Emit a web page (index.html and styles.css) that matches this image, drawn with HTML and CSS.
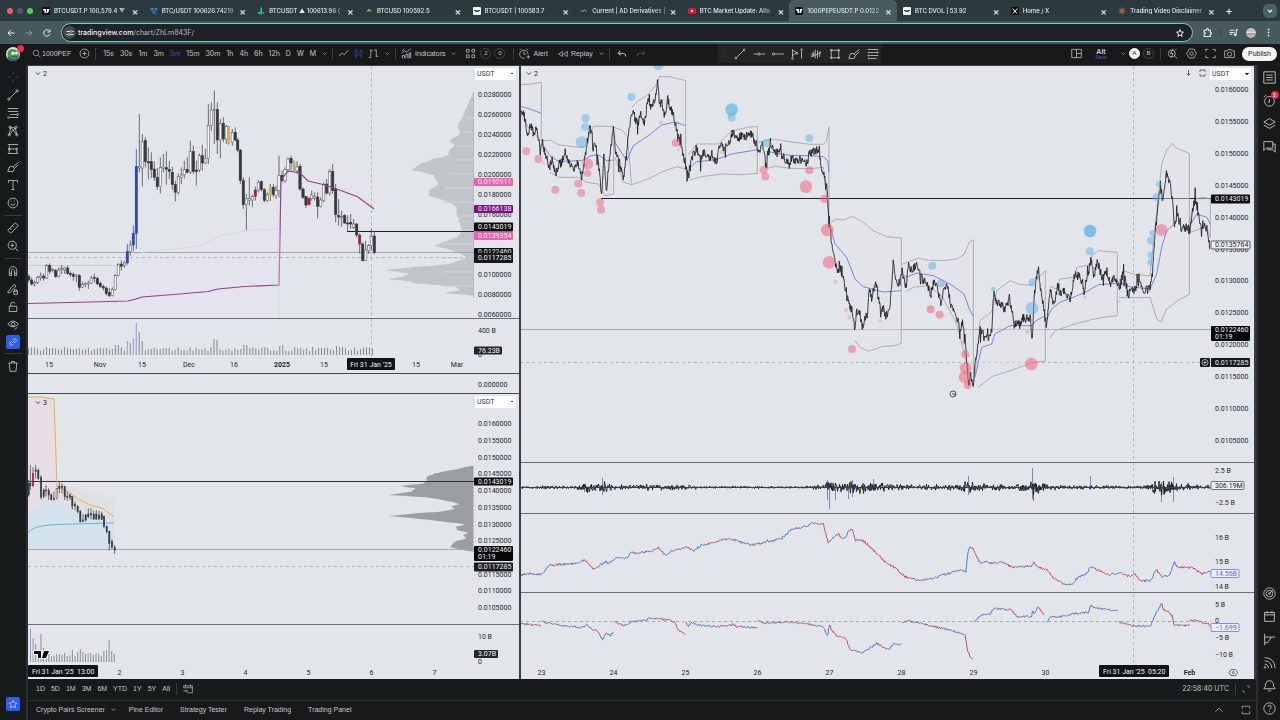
FILE: index.html
```html
<!DOCTYPE html>
<html lang="en">
<head>
<meta charset="utf-8">
<title>1000PEPEUSDT.P 0.0122460</title>
<link rel="stylesheet" href="styles.css">
</head>
<body>
<header class="tabs">
  <div class="lights"><i class="red"></i><i class="grey"></i><i class="green"></i></div>
  <nav class="tablist">
    <div class="tab"><svg class="fav" viewBox="0 0 16 16"><rect width="16" height="16" rx="3" fill="#111"/><path d="M2 4h6v8H5V7H2zM10 4h5l-3 8H9z" fill="#fff"/></svg><span>BTCUSDT.P 100,579.4 ▼</span><button aria-label="Close">×</button></div>
    <div class="tab"><svg class="fav" viewBox="0 0 16 16"><path d="M1 2h6v5H1zM9 2h6v5H9zM5 8h6v5H5z" fill="#3f7fb8"/><path d="M8 9h5v6H8z" fill="#2a5c93"/></svg><span>BTC/USDT 100626.74219</span><button aria-label="Close">×</button></div>
    <div class="tab"><svg class="fav" viewBox="0 0 16 16"><path d="M7 1h3v14H7zM1 10h5v4H3zM11 8l4 5h-4z" fill="#2fc9a0"/></svg><span>BTCUSDT ▲ 100613.96 (</span><button aria-label="Close">×</button></div>
    <div class="tab"><svg class="fav" viewBox="0 0 16 16"><path d="M2 9l6-6 6 6z" fill="#8fae3c"/></svg><span>BTCUSD 100592.5</span><button aria-label="Close">×</button></div>
    <div class="tab"><svg class="fav" viewBox="0 0 16 16"><rect width="16" height="16" rx="2" fill="#f2f4f4"/><path d="M2 7h3l1 3 1-3h2l1 3 1-3h3" fill="none" stroke="#333" stroke-width="2"/></svg><span>BTCUSDT | 100583.7</span><button aria-label="Close">×</button></div>
    <div class="tab"><svg class="fav" viewBox="0 0 16 16"><path d="M2 10l3-4 2 3 2-4 5 5" fill="none" stroke="#8b9599" stroke-width="2"/></svg><span>Current | AD Derivatives |</span><button aria-label="Close">×</button></div>
    <div class="tab"><svg class="fav" viewBox="0 0 16 16"><rect y="2" width="16" height="12" rx="3" fill="#e0103a"/><path d="M6 5l5 3-5 3z" fill="#fff"/></svg><span>BTC Market Update: Alts</span><button aria-label="Close">×</button></div>
    <div class="tab on"><svg class="fav" viewBox="0 0 16 16"><rect width="16" height="16" rx="3" fill="#111"/><path d="M2 4h6v8H5V7H2zM10 4h5l-3 8H9z" fill="#fff"/></svg><span>1000PEPEUSDT.P 0.0122</span><button aria-label="Close">×</button></div>
    <div class="tab"><svg class="fav" viewBox="0 0 16 16"><rect width="16" height="16" rx="2" fill="#f2f4f4"/><path d="M2 7h3l1 3 1-3h2l1 3 1-3h3" fill="none" stroke="#333" stroke-width="2"/></svg><span>BTC DVOL | 53.92</span><button aria-label="Close">×</button></div>
    <div class="tab"><svg class="fav" viewBox="0 0 16 16"><rect width="16" height="16" rx="2" fill="#0c0e0f"/><path d="M3 3l9 10M13 3L4 13" stroke="#fff" stroke-width="2"/></svg><span>Home / X</span><button aria-label="Close">×</button></div>
    <div class="tab"><svg class="fav" viewBox="0 0 16 16"><path d="M8 1v14M1 8h14M3 3l10 10M13 3L3 13" stroke="#c4655a" stroke-width="2"/></svg><span>Trading Video Disclaimer</span><button aria-label="Close">×</button></div>
  </nav>
  <button class="newtab" aria-label="New tab">+</button>
  <button class="tabmenu" aria-label="Search tabs"><svg class="ic s8" viewBox="0 0 16 16"><path d="M4 6l4 4 4-4" stroke-width="2.500"/></svg></button>
</header>
<div class="address">
  <button aria-label="Back"><svg class="ic s8" viewBox="0 0 16 16"><path d="M15 8H2M8 2L2 8l6 6" stroke-width="2"/></svg></button>
  <button class="dim" aria-label="Forward"><svg class="ic s8" viewBox="0 0 16 16"><path d="M1 8h13M8 2l6 6-6 6" stroke-width="2"/></svg></button>
  <button aria-label="Reload"><svg class="ic s8" viewBox="0 0 16 16"><path d="M13 4a6.500 6.500 0 1 0 1 6M14 1v5H9" stroke-width="2"/></svg></button>
  <div class="urlbox">
    <span class="site"><svg class="ic s8" viewBox="0 0 16 16"><path d="M1 5h7M12 5h3M1 11h3M8 11h7" stroke-width="2"/><circle cx="10" cy="5" r="2"/><circle cx="6" cy="11" r="2"/></svg></span>
    <span class="url"><b>tradingview.com</b>/chart/ZhLm843F/</span>
    <svg class="ic s8 star" viewBox="0 0 16 16"><path d="M8 1l2 5 5 .4-4 3.300 1.300 5L8 12l-4.300 2.700 1.300-5-4-3.300L6 6z" stroke-width="2"/></svg>
  </div>
  <svg class="ic s9" viewBox="0 0 16 16"><path d="M2 4h4c0-4 4-4 4 0h3v4c3 0 3 3 0 3v4H2v-4c3 0 3-3 0-3z" stroke-width="2"/></svg>
  <i class="bar"></i>
  <svg class="ic s9" viewBox="0 0 16 16"><path d="M1 4h9M1 8h9M1 11h5M13 12V3h3" stroke-width="2"/><circle cx="11" cy="12" r="2" fill="currentColor"/></svg>
  <i class="face"></i>
  <svg class="s9" viewBox="0 0 16 16" fill="#e5ecec"><circle cx="8" cy="2.500" r="1.600"/><circle cx="8" cy="8" r="1.600"/><circle cx="8" cy="13.500" r="1.600"/></svg>
</div>
<div class="toolbar">
  <div class="avatar"><svg viewBox="0 0 16 16"><circle cx="8" cy="8" r="8" fill="#dfe5e2"/><path d="M2 6c2-5 9-5 13 1v4c-2 4-9 5-13 2z" fill="#4b9a48"/><circle cx="8" cy="7" r="1.800" fill="#fff"/><circle cx="12" cy="7" r="1.500" fill="#fff"/><path d="M6 11h8" stroke="#7c4a2c" stroke-width="1.500"/><path d="M3 12c3 4 8 4 10 1" stroke="#324a9c" stroke-width="2" fill="none"/></svg><b></b></div>
  <button class="symbol"><svg class="ic s9" viewBox="0 0 16 16"><circle cx="7" cy="7" r="5"/><path d="M11 11l4 4"/></svg>1000PEF</button>
  <button aria-label="Compare"><svg class="ic s12" viewBox="0 0 16 16"><circle cx="8" cy="8" r="6.500"/><path d="M8 5v6M5 8h6"/></svg></button>
  <i class="div"></i>
  <div class="times"><button>15s</button><button>30s</button><button>1m</button><button>3m</button><button class="sel">5m</button><button>15m</button><button>30m</button><button>1h</button><button>4h</button><button>6h</button><button>12h</button><button>D</button><button>W</button><button>M</button></div>
  <svg class="ic chev" viewBox="0 0 16 16"><path d="M2 5l6 6 6-6" stroke-width="2"/></svg>
  <i class="div"></i>
  <div class="icons">
    <svg class="ic s12" viewBox="0 0 16 16"><path d="M1 12l5-5 3 3 6-7"/></svg>
    <svg class="ic s12 blue" viewBox="0 0 16 16"><path d="M3 4h3v8H3zM10 5h3v6h-3zM4.500 1v3M4.500 12v3M11.500 2v3M11.500 11v3"/></svg>
    <svg class="ic s12" viewBox="0 0 16 16"><path d="M4 2v12M4 4h3M1 14h3M12 2v11M9 3h3M12 12h3"/></svg>
  </div>
  <svg class="ic chev" viewBox="0 0 16 16"><path d="M2 5l6 6 6-6" stroke-width="2"/></svg>
  <i class="div"></i>
  <button class="labelled"><svg class="ic s12" viewBox="0 0 16 16"><path d="M2 15v-4h3v4M7 15V9h3v6M12 15V7h2v8M1 8l4-4 3 2 6-5M2 4l3-3"/></svg>Indicators</button>
  <svg class="ic chev" viewBox="0 0 16 16"><path d="M2 5l6 6 6-6" stroke-width="2"/></svg>
  <svg class="ic s12 grid4" viewBox="0 0 16 16"><path d="M2 2h4v4H2zM10 2h4v4h-4zM2 10h4v4H2zM10 10h4v4h-4z"/></svg>
  <span class="num">2</span><span class="num">0</span>
  <i class="div"></i>
  <button class="labelled"><svg class="ic s12" viewBox="0 0 16 16"><path d="M13 9a6 6 0 1 0-5 6M7 5v4h3M1 3l2-2M13 3l-2-2M11 13h5M13.500 10.500v5"/></svg>Alert</button>
  <button class="labelled replay"><svg class="ic s10" viewBox="0 0 16 16"><path d="M7 4L1 8l6 4zM15 4L9 8l6 4z"/></svg>Replay</button>
  <svg class="ic chev" viewBox="0 0 16 16"><path d="M2 5l6 6 6-6" stroke-width="2"/></svg>
  <i class="div"></i>
  <div class="history">
    <svg class="ic s10" viewBox="0 0 16 16"><path d="M5 3L2 7l4 3M2 7h8q4 0 4 5" stroke-width="1.500"/></svg>
    <svg class="ic s10 faint" viewBox="0 0 16 16"><path d="M11 3l3 4-4 3M14 7H6q-4 0-4 5" stroke-width="1.500"/></svg>
  </div>
  <div class="favs">
    <svg class="grip" viewBox="0 0 8 12" fill="#5b5b60"><path d="M1 1h1v1H1zM5 1h1v1H5zM1 5h1v1H1zM5 5h1v1H5zM1 9h1v1H1zM5 9h1v1H5z"/></svg>
    <svg class="ic" viewBox="0 0 16 16"><path d="M3 13L13 3"/><circle cx="2.500" cy="13.500" r="1.200"/><circle cx="13.500" cy="2.500" r="1.200"/></svg>
    <svg class="ic" viewBox="0 0 16 16"><path d="M1 8h5M10 8h6"/><circle cx="8" cy="8" r="1.500"/></svg>
    <svg class="ic" viewBox="0 0 16 16"><path d="M4 8h12"/><circle cx="2" cy="8" r="1.500"/></svg>
    <svg class="ic" viewBox="0 0 16 16"><path d="M2 2v11M2 3l6 3-6 4M14 3v11"/><circle cx="2" cy="14" r="1.200"/><circle cx="8" cy="7" r="1.200"/><circle cx="14" cy="2" r="1"/></svg>
    <svg class="ic" viewBox="0 0 16 16"><path d="M1 9h4V6M7 2v12M10 3v11M4 5v7M13 4v8M1 12L15 6"/></svg>
    <svg class="ic" viewBox="0 0 16 16"><path d="M3 3h10v10H3z"/><circle cx="3" cy="3" r="1.200"/><circle cx="13" cy="3" r="1.200"/><circle cx="3" cy="13" r="1.200"/><circle cx="13" cy="13" r="1.200"/></svg>
    <svg class="ic" viewBox="0 0 16 16"><path d="M1 14l2-6 4-1 3 3-2 4zM8 8l7-6M10 10l5-5"/></svg>
    <svg class="ic" viewBox="0 0 16 16"><path d="M1 2h14M1 6h12M4 10h11M1 14h12"/><circle cx="14" cy="6" r="1"/><circle cx="2" cy="10" r="1"/></svg>
  </div>
  <div class="right">
    <svg class="ic s12" viewBox="0 0 16 16"><path d="M1 2h14v12H1zM8 2v12M8 8h7"/></svg>
    <div class="alt">Alt<small>Save</small></div>
    <svg class="ic chev" viewBox="0 0 16 16"><path d="M2 5l6 6 6-6" stroke-width="2"/></svg>
    <span class="num white">A</span><span class="num">B</span>
    <i class="div"></i>
    <div class="icons wide">
      <svg class="ic s12" viewBox="0 0 16 16"><circle cx="7" cy="8" r="5"/><path d="M11 12l4 3M9 1L5 8h4l-3 6M12 3l2-2"/></svg>
      <svg class="ic s12" viewBox="0 0 16 16"><path d="M4.500 1.500h7L15 8l-3.500 6.500h-7L1 8z"/><circle cx="8" cy="8" r="2.500"/></svg>
      <svg class="ic s12" viewBox="0 0 16 16"><path d="M1 5V2h4M11 2h4v3M15 11v3h-4M5 14H1v-3"/></svg>
      <svg class="ic s12" viewBox="0 0 16 16"><path d="M1 4h4l1-2h4l1 2h4v10H1z"/><circle cx="8" cy="9" r="3"/></svg>
    </div>
    <button class="publish">Publish</button>
  </div>
</div>
<main class="work">
  <aside class="tools">
    <svg class="ic blue" viewBox="0 0 16 16"><path d="M8 1v4M8 11v4M1 8h4M11 8h4"/></svg>
    <svg class="ic" viewBox="0 0 16 16"><path d="M3 13L13 3"/><circle cx="2.500" cy="13.500" r="1.500"/><circle cx="13.500" cy="2.500" r="1.500"/></svg>
    <svg class="ic" viewBox="0 0 16 16"><path d="M1 2h14M1 6h14M4 10h9M4 14h11"/><circle cx="2" cy="14" r="1.200"/><circle cx="14" cy="10" r="1.200"/></svg>
    <svg class="ic" viewBox="0 0 16 16"><path d="M3 13L5 3l8 10-2-9-8 9M5 3l6 1"/><circle cx="4" cy="3" r="1.500"/><circle cx="12" cy="3" r="1.500"/><circle cx="3" cy="13" r="1.500"/><circle cx="13" cy="13" r="1.500"/></svg>
    <svg class="ic" viewBox="0 0 16 16"><path d="M1 2h14M4 8h8M1 14h14M3 3v10M13 9v5"/><circle cx="3" cy="8" r="1.200"/><circle cx="13" cy="8" r="1.200"/></svg>
    <svg class="ic" viewBox="0 0 16 16"><path d="M1 14l2-6 4-1 3 3-2 4zM8 8l7-6M10 10l5-5"/></svg>
    <svg class="ic" viewBox="0 0 16 16"><path d="M2 5V2h12v3M8 2v12M6 14h4"/></svg>
    <svg class="ic" viewBox="0 0 16 16"><circle cx="8" cy="8" r="6.500"/><path d="M5 9q3 4 6 0M6 5v1M10 5v1"/></svg>
    <hr>
    <svg class="ic" viewBox="0 0 16 16"><path d="M1 11L11 1l4 4L5 15zM4 8l2 2M7 5l2 2"/></svg>
    <svg class="ic" viewBox="0 0 16 16"><circle cx="7" cy="7" r="5.500"/><path d="M11 11l4 4M7 4.500v5M4.500 7h5"/></svg>
    <hr>
    <svg class="ic" viewBox="0 0 16 16"><path d="M3 14V8c0-8 10-8 10 0v6h-3V8c0-3-4-3-4 0v6zM3 11h3M10 11h3"/></svg>
    <svg class="ic" viewBox="0 0 16 16"><path d="M1 12L9 2l3 2-8 9H1zM9 11h5v4H9zM10 11V9h3v2"/></svg>
    <svg class="ic" viewBox="0 0 16 16"><path d="M3 7h10v7H3zM5 7V3q3-3 6 0M8 10v1"/></svg>
    <svg class="ic" viewBox="0 0 16 16"><path d="M1 7q7-9 14 0-7 7-14 0M10 14l4-3"/><circle cx="8" cy="7" r="2.500"/></svg>
    <svg class="ic filled" viewBox="0 0 16 16"><path d="M7 5l2-2q3-1 4 1 1 2-1 4l-2 1M9 11l-2 2q-3 1-4-1-1-2 1-4l2-1M6 10l4-4"/></svg>
    <hr>
    <svg class="ic" viewBox="0 0 16 16"><path d="M2 4h12M6 4V2h4v2M3 4l1 11h8l1-11"/></svg>
    <svg class="ic filled last" viewBox="0 0 16 16"><path d="M8 2l2 4 4 .5-3 3 1 4.500-4-2-4 2 1-4.500-3-3L6 6z"/></svg>
  </aside>
  <div class="center">
    <div class="charts">
      <div class="leftcol">
        <section class="pane"><svg id="daily" viewBox="28 66 491 307"></svg><select aria-label="Currency"><option>USDT</option></select></section>
        <section class="pane line"><svg id="strip" viewBox="28 374 491 19"></svg></section>
        <section class="pane line"><svg id="hourly" viewBox="28 394 491 285"></svg><select aria-label="Currency"><option>USDT</option></select></section>
      </div>
      <section class="pane"><svg id="main" viewBox="521 66 733 613"></svg><select aria-label="Currency"><option>USDT</option></select></section>
    </div>
    <div class="ranges">
      <button>1D</button><button>5D</button><button>1M</button><button>3M</button><button>6M</button><button>YTD</button><button>1Y</button><button>5Y</button><button>All</button><i class="div"></i>
      <svg class="ic s10" viewBox="0 0 16 16"><path d="M1 6V3h14v11H7M1 6h14M4 1v3M12 1v3M1 11h6M5 9l2 2-2 2"/></svg>
      <span class="clock">22:58:40 UTC</span><i class="div"></i>
      <svg class="ic s8" viewBox="0 0 16 16"><path d="M10 2h4v4M2 10v4h4"/></svg>
    </div>
    <div class="footer">
      <button>Crypto Pairs Screener <svg class="ic chev" viewBox="0 0 16 16"><path d="M2 5l6 6 6-6" stroke-width="2"/></svg></button>
      <button>Pine Editor</button><button>Strategy Tester</button><button>Replay Trading</button><button>Trading Panel</button>
      <svg class="ic s10 push" viewBox="0 0 16 16"><path d="M2 11l6-6 6 6"/></svg>
      <svg class="ic s10" viewBox="0 0 16 16"><path d="M2 6V2h12v4M2 10v4h12v-4"/></svg>
    </div>
  </div>
  <aside class="side">
    <svg class="ic" viewBox="0 0 16 16"><path d="M1 1h14v14H1zM4 5h8M4 8h8M4 11h8"/></svg>
    <div class="alarm"><svg class="ic" viewBox="0 0 16 16"><circle cx="8" cy="9" r="6"/><path d="M8 6v4H6M1 4l3-3M15 4l-3-3"/></svg><b>1</b></div>
    <svg class="ic" viewBox="0 0 16 16"><path d="M1 6l7-4 7 4-7 4zM1 10l7 4 7-4"/></svg>
    <svg class="ic" viewBox="0 0 16 16"><path d="M1 2h11v8H4l-3 3zM12 5h3v10l-3-3H6v-2"/></svg>
    <svg class="ic push" viewBox="0 0 16 16"><circle cx="8" cy="8" r="7"/><circle cx="8" cy="8" r="4"/><circle cx="8" cy="8" r="1"/><path d="M8 8l4-4"/></svg>
    <svg class="ic" viewBox="0 0 16 16"><path d="M2 3h12v11H2zM2 6h12M5 1v3M11 1v3"/></svg>
    <svg class="ic" viewBox="0 0 16 16"><path d="M2 1v14M2 5h13M2 12h4l4-7"/></svg>
    <svg class="ic" viewBox="0 0 16 16"><path d="M2 2q12 0 13 13M2 6q8 0 9 9M2 10q4 0 5 5"/><circle cx="2.500" cy="14" r="1"/></svg>
    <svg class="ic" viewBox="0 0 16 16"><path d="M1 12l2-3V6q1-4 5-4t5 4v3l2 3zM6 14q2 2 4 0"/></svg>
    <svg class="ic" viewBox="0 0 16 16"><circle cx="8" cy="8" r="7"/><path d="M6 6q0-2 2-2t2 2-2 3M8 11v1"/></svg>
  </aside>
</main>
<script src="charts.js"></script>
</body>
</html>
```
FILE: styles.css
```css
* { box-sizing: border-box; }
body { margin: 0; height: 100vh; display: flex; flex-direction: column; overflow: hidden; background: #171919; color: #c4c6c8; font-family: "Liberation Sans", sans-serif; font-size: 7px; }
button { background: none; border: 0; padding: 0; margin: 0; color: inherit; font: inherit; white-space: nowrap; }
.ic { fill: none; stroke: currentColor; stroke-width: 1.1; flex: none; }
.s8 { width: 8px; height: 8px; flex: none; }
.s9 { width: 9px; height: 9px; flex: none; }
.s10 { width: 10px; height: 10px; flex: none; }
.s12 { width: 11px; height: 11px; }
.chev { width: 5px; height: 5px; }
.blue { color: #3048a8; }
.faint { opacity: .3; }
.push { margin-left: auto; }
.div { width: 1px; height: 12px; background: #3a3b3e; flex: none; }

.tabs { flex: none; height: 21px; background: #2b3a3e; display: flex; align-items: stretch; padding-right: 3px; color: #e6eaea; font-family: Inter, sans-serif; font-size: 6px; font-weight: 500; }
.lights { width: 36px; display: flex; align-items: center; gap: 4px; padding-left: 7px; }
.lights i { width: 6px; height: 6px; border-radius: 50%; }
.red { background: #ef5b5f; }
.grey { background: #56585c; }
.green { background: #3ddc50; }
.tablist { flex: 1; display: grid; grid-template-columns: repeat(11, 1fr); }
.tab { display: flex; align-items: center; min-width: 0; padding: 0 6px 0 6px; border-radius: 5px 5px 0 0; }
.tab span { flex: 1; min-width: 0; white-space: nowrap; margin-left: 4px; margin-right: 3px; mask-image: linear-gradient(90deg, #000 80%, rgba(0, 0, 0, .4)); }
.tab button { font-size: 10px; width: 6px; }
.tab.on { background: #485b5f; }
.fav { width: 8px; height: 8px; flex: none; }
.newtab { font-size: 11px; width: 18px; }
.tabmenu { width: 14px; height: 14px; margin: 4px 0 0 25px; border-radius: 5px; background: #466366; }

.address { flex: none; height: 23px; background: #46595d; display: flex; align-items: center; gap: 10px; padding: 0 7px; color: #e5ecec; }
.address button { width: 8px; height: 8px; line-height: 0; }
.dim { opacity: .45; }
.urlbox { flex: 1; height: 19px; background: #1f2325; border: 1px solid #7fc4c6; border-radius: 10px; display: flex; align-items: center; padding: 0 8px 0 1px; font-family: Inter, sans-serif; font-size: 7px; }
.site { width: 13px; height: 13px; border-radius: 50%; background: #414d51; display: grid; place-items: center; margin-right: 2px; }
.url { color: #b6bcbe; }
.url b { font-weight: 500; color: #f0f3f3; }
.star { margin-left: auto; }
.bar { width: 1px; height: 9px; background: #31474a; margin: 0 -2px; }
.face { width: 10px; height: 10px; border-radius: 50%; background: linear-gradient(#cbb 30%, #dcdcdc 45%, #888 60%, #bbb 70%); margin: 0 -2px; }

.toolbar { flex: none; height: 21px; background: #19191b; display: flex; align-items: center; padding: 0 3px 2px 6px; }
.avatar { position: relative; width: 14px; height: 14px; }
.avatar svg { display: block; width: 14px; height: 14px; }
.avatar b { position: absolute; right: -4px; top: -2px; width: 7px; height: 7px; border-radius: 50%; background: #e5304f; }
.symbol { display: flex; align-items: center; gap: 1px; margin: 0 8px 0 12px; }
.toolbar > .div { margin: 0 5px; }
.times { display: flex; gap: 6px; margin-left: 2px; font-family: Inter, sans-serif; }
.sel { color: #3a55c4; }
.toolbar > .chev { margin-left: 6px; }
.icons { display: flex; gap: 4px; }
.icons.wide { gap: 8px; margin-right: 7px; }
.labelled { display: flex; align-items: center; gap: 3px; }
.replay { margin-left: 10px; }
.grid4 { margin: 0 4px 0 9px; }
.num { width: 11px; height: 11px; border: 1px solid #444548; border-radius: 50%; font-size: 6px; line-height: 9px; text-align: center; margin-right: 3px; }
.num.white { background: #f2f2f2; color: #222; border-color: #f2f2f2; }
.history { display: flex; gap: 9px; margin-left: 2px; }
.favs { margin-left: 72px; margin-right: auto; height: 19px; background: #242326; display: flex; align-items: center; gap: 7px; padding: 0 2px 0 3px; }
.favs .ic { width: 12px; height: 12px; }
.grip { width: 6px; height: 9px; }
.right { display: flex; align-items: center; }
.alt { width: 24px; text-align: center; line-height: 7px; margin: 0 8px 0 7px; font-weight: 700; }
.alt small { display: block; font-size: 5px; line-height: 5px; color: #3f5cd0; font-weight: 400; }
.right .num { margin: 0 0 0 3px; }
.right .div { margin: 0 6px; }
.publish { background: #f4f4f4; color: #222; height: 14px; width: 35px; border-radius: 8px; }

.work { flex: 1; min-height: 0; display: grid; grid-template-columns: 26px 1fr 22px; column-gap: 2px; background: #2c2e31; }
.tools { background: #161a1a; display: flex; flex-direction: column; align-items: center; gap: 6px; padding-top: 6px; padding-bottom: 9px; }
.tools .ic { width: 12px; height: 12px; }
.tools hr { width: 18px; border: 0; border-top: 1px solid #393c3e; margin: 0; }
.tools .filled { background: #2e5bf0; border-radius: 2px; width: 14px; height: 14px; padding: 2px; margin: -2px 0; color: #dfe6ff; }
.tools .last { margin-top: auto; margin-bottom: 0; }
.center { display: flex; flex-direction: column; min-width: 0; min-height: 0; }
.charts { flex: 1; min-height: 0; display: grid; grid-template-columns: 491fr 733fr; gap: 2px; padding: 1px 2px 0 0; background: #3b3d42; }
.leftcol { display: grid; grid-template-rows: 307fr 20fr 286fr; min-height: 0; }
.pane { position: relative; background: #e2e6ea; min-height: 0; min-width: 0; }
.pane.line { border-top: 1px solid #44484c; }
.pane > svg { display: block; width: 100%; height: 100%; }
.pane select { position: absolute; right: 3px; top: 2px; width: 41px; height: 12px; border: 0; background: #fff; color: #333; font: 7px Roboto, sans-serif; padding: 0 0 0 2px; appearance: none; background-image: linear-gradient(45deg, transparent 50%, #444 50%), linear-gradient(-45deg, transparent 50%, #444 50%); background-size: 2px 2px; background-position: 35px 5px, 37px 5px; background-repeat: no-repeat; }
.ranges, .footer { flex: none; display: flex; align-items: center; background: #181b1b; }
.ranges { height: 21px; gap: 6px; padding: 0 6px 2px 8px; }
.ranges .clock { margin-left: auto; font-family: Inter, sans-serif; }
.footer { height: 20px; background: #19191b; border-top: 1px solid #2f3133; gap: 17px; padding: 0 5px 2px 8px; }
.footer .chev { margin-left: 4px; margin-right: -4px; }
.side { background: #19191a; display: flex; flex-direction: column; align-items: center; gap: 10px; padding: 6px 0 5px; }
.side .ic { width: 13px; height: 13px; display: block; }
.side .push { margin-top: auto; margin-left: 0; }
.alarm { position: relative; }
.alarm b { position: absolute; right: -3px; top: -3px; width: 8px; height: 8px; border-radius: 50%; background: #ec2846; color: #fff; font-size: 6px; line-height: 8px; text-align: center; }

text { font-family: Roboto, sans-serif; font-size: 7px; fill: #24272b; dominant-baseline: central; }
.mid { text-anchor: middle; }
.bold { font-weight: 700; }
.light { fill: #f1f3f4; }
.indigo { fill: #5b66e0; }
```
FILE: charts.js
```javascript
const NS = 'http://www.w3.org/2000/svg';
let seed = 11;
const rnd = () => (seed = (seed * 16807) % 2147483647) / 2147483647;
const add = (s, tag, a, txt) => {
  const e = document.createElementNS(NS, tag);
  for (const k in a) e.setAttribute(k, a[k]);
  if (txt !== undefined) e.textContent = txt;
  s.appendChild(e);
  return e;
};
const line = (s, x1, y1, x2, y2, stroke, dash) =>
  add(s, 'path', { d: `M${x1} ${y1}L${x2} ${y2}`, stroke, fill: 'none', 'stroke-dasharray': dash || 'none' });
const label = (s, x, y, t, cls) => add(s, 'text', { x, y, class: cls || '' }, t);
const tag = (s, x, y, w, h, fill, t, stroke, cls) => {
  add(s, 'rect', { x, y: y - h / 2, width: w, height: h, rx: 1, fill, stroke: stroke || 'none', 'stroke-width': .8 });
  if (t) label(s, x + 4, y, t, cls || 'light');
};
/* Parses "x,y x,y" pairs of a trace stored at three units per pixel. */
const pts = (str, ox, oy) => str.trim().split(/\s+/).map(p => {
  const [x, y] = p.split(',').map(Number);
  return [ox + x / 3, oy + y / 3];
});
const path = p => 'M' + p.map(q => q[0].toFixed(1) + ' ' + q[1].toFixed(1)).join('L');
const at = (p, x) => {
  let i = 1;
  while (i < p.length - 1 && p[i][0] < x) i++;
  const [a, b] = [p[i - 1], p[i]];
  return a[1] + (b[1] - a[1]) * Math.min(1, Math.max(0, (x - a[0]) / (b[0] - a[0] || 1)));
};
const candles = (s, rows, ox, oy, w) => {
  const col = { d: '#34373c', u: '#f4f6f8', b: '#3146a8', r: '#9c2238', y: '#c9b05c' };
  rows.trim().split('\n').forEach(r => r.trim().split(/\s*;\s*/).forEach(c => {
    if (!c) return;
    const [x, t, hi, a, b, lo] = c.split(' ');
    const px = ox + x / 3, y = v => oy + v / 3;
    add(s, 'path', { d: `M${px} ${y(hi)}V${y(lo)}`, stroke: t === 'b' ? '#3146a8' : '#4a4d52', 'stroke-width': .8 });
    add(s, 'rect', { x: px - w / 2, y: y(a), width: w, height: Math.max(.8, y(b) - y(a)), fill: col[t], stroke: t === 'u' ? '#4a4d52' : col[t], 'stroke-width': .5 });
  }));
};
const profile = (s, str, ox, oy, right, fill) => {
  const p = pts(str, ox, oy);
  const d = [];
  for (let y = p[0][1]; y < p[p.length - 1][1]; y += .7) {
    const x = at(p.map(q => [q[1], q[0]]), y);
    d.push([x + (rnd() - .5) * 2, y]);
  }
  add(s, 'path', { d: path([[right, p[0][1]], ...d, [right, p[p.length - 1][1]]]) + 'Z', fill });
};

/* Daily chart */
const A = document.getElementById('daily');
add(A, 'path', { d: 'M28 265H128L145 254 200 246 240 231 279 229V319H28Z', fill: '#e6e2f0', opacity: .7 });
add(A, 'path', { d: 'M282 171L300 166 372 179V252H282Z', fill: '#e6e2f0', opacity: .5 });
line(A, 28, 265.5, 128, 265.5, '#c9d0d0');
profile(A, '640,85 625,120 605,165 592,180 600,210 568,228 585,245 567,260 563,275 520,285 480,300 455,318 490,325 525,335 527,345 535,365 510,375 505,395 550,408 590,428 590,450 600,480 607,500 590,520 522,545 580,560 620,580 570,600 440,612 375,618 450,630 420,640 380,645 450,652 460,658 590,668 600,680 550,687 640,695', 260, 64, 473.5, '#c0c5c9');
for (let y = 104; y < 290; y += 14) line(A, Math.max(y > 210 && y < 240 ? 460 : 442, 474 - (y - 92) * .3), y, 473, y, '#d0d4d7');
line(A, 473.5, 92, 473.5, 298, '#b3b9bd');
line(A, 28, 252.5, 474, 252.5, '#a4a8aa');
line(A, 28, 257.5, 474, 257.5, '#b1b6b9', '3 3');
line(A, 371.5, 66, 371.5, 358, '#b4b8bc', '3 3');
line(A, 347, 231.5, 474, 231.5, '#222');
candles(A, `86 d 630 637 648 655;95 d 640 648 660 665;104 u 650 655 660 668;113 u 635 640 655 660;122 u 625 636 640 650;131 d 628 636 642 650;140 u 600 605 642 645;149 d 598 605 622 630;158 u 612 617 620 625;167 d 615 620 638 642;176 u 610 618 638 640;185 u 603 613 616 630;194 u 610 612 618 630;203 d 605 612 628 632;211 d 622 628 632 640;220 d 625 631 637 650;229 u 630 633 637 655;238 d 630 634 670 680;247 u 652 662 670 672;256 u 655 658 662 670;265 u 650 657 660 675;274 u 635 642 658 660;283 d 628 640 643 655;292 d 638 643 660 662;301 d 652 658 668 672;310 d 662 668 672 680;319 d 668 672 688 695;328 d 672 686 695 700;337 u 670 677 695 697;346 u 630 635 677 680;355 u 598 602 635 637;364 d 588 600 607 620;373 u 590 597 603 612;382 b 540 563 597 602;391 u 530 543 563 575;400 b 485 508 543 562;409 b 255 307 508 555;418 u 150 307 312 325
427 u 210 232 312 367;436 d 220 230 293 310;445 d 250 293 297 347;454 d 265 293 317 342;463 d 292 315 340 350;472 d 312 340 368 378;481 u 280 311 368 388;490 u 270 309 313 325;499 d 262 311 316 362;508 d 290 316 322 345;517 d 308 325 362 378;526 d 350 362 385 412;535 u 328 338 385 392;544 u 310 333 340 360;553 u 290 317 333 343;562 d 280 317 325 328;571 u 230 262 325 330;580 d 245 262 323 330;589 d 290 318 323 365;598 u 268 275 318 325;607 d 242 275 297 320;616 u 255 283 297 300;625 u 120 184 283 300;634 u 115 138 184 200;643 u 80 136 140 240;652 d 115 136 228 270;661 u 165 178 228 283;670 d 160 178 225 235;679 u 183 188 225 240;686 y 185 188 235 242;697 u 195 205 235 245;706 d 190 205 228 232;713 d 222 228 258 265;721 d 255 258 350 360;730 d 340 350 422 435;739 u 390 403 422 500;748 u 340 403 409 425;757 u 392 398 408 430;766 r 368 378 397 410;775 u 348 355 378 385;784 d 350 352 377 383`, 0, 64, 2.4);
candles(A, `13 d 372 377 410 415;22 u 385 392 410 415;31 y 360 370 395 412;40 d 360 370 392 400;48 u 365 380 395 405;57 u 275 334 380 400;66 d 320 334 350 355;75 u 310 317 350 357;84 u 280 285 317 325;93 d 275 283 297 320;102 y 290 297 312 322;111 u 292 309 320 330;120 d 300 307 375 380;129 d 370 375 400 405;138 d 395 398 423 432;147 r 400 403 422 425;155 u 380 393 403 410;164 u 385 397 403 410;173 d 385 399 427 463;182 u 400 408 427 430;191 u 355 362 410 415;200 d 345 360 387 392;209 u 315 322 387 395;218 d 300 322 380 390;227 d 360 375 452 475;236 d 405 455 459 485;245 u 440 457 460 488;254 d 450 455 477 480;263 d 455 477 480 500;272 d 450 475 480 495;281 u 465 480 490 495;290 d 477 480 513 520;299 r 508 513 540 568;308 d 535 540 590 592;317 u 530 558 590 592;326 u 540 545 560 570;334 u 495 517 545 560;343 d 500 516 566 570`, 260, 64, 2.4);
add(A, 'path', { d: 'M28 303.500L90 302 128 301 136 299 142 297 180 294 208 291.500 218 289 245 286.500 279 285 281 180 288 171 300 173 308 181 321 184 331 187 345 192 358 197 374 209', fill: 'none', stroke: '#94418f', 'stroke-width': 1.2 });
add(A, 'path', { d: 'M128 265L134 255 145 252 200 246 220 236 245 231 279 229V319', fill: 'none', stroke: '#dccfe4', 'stroke-width': .8 });
line(A, 28, 318.5, 519, 318.5, '#6a6e72');
const tall = { 29: 10, 30: 10, 33: 14, 34: 12, 35: 17, 36: 32, 37: 23, 38: 14, 62: 16, 63: 15, 72: 10, 73: 10, 84: 9, 85: 10, 103: 9, 104: 8 };
for (let i = 0; i < 117; i++) {
  const x = 28.6 + i * 2.99;
  if (x > 375) break;
  const h = tall[i] || 4 + rnd() * 4;
  line(A, x, 355, x, 355 - h, [33, 35, 36].includes(i) ? '#8d97d4' : '#85898e');
}
['0.0280000', '0.0260000', '0.0240000', '0.0220000', '0.0200000', '0.0180000', '0.0160000', '', '', '0.0100000', '0.0080000', '0.0060000'].forEach((t, i) => t && label(A, 478, 94.5 + i * 20.05, t));
label(A, 478, 331, '400 B'); label(A, 478, 355, '0');
tag(A, 474, 182, 39, 8, '#ee5fae', '0.0192911');
tag(A, 474, 209, 39, 8, '#7b1284', '0.0166138');
tag(A, 474, 236, 39, 8, '#ee5fae', '0.0139354');
tag(A, 474, 227, 39, 9, '#0c0d0f', '0.0143019');
tag(A, 474, 252, 39, 8, '#0c0d0f', '0.0122460');
tag(A, 474, 258, 39, 10, '#16191b', '0.0117285');
tag(A, 474, 350.5, 28, 8, '#24272a', '76.23B');
[[49, '15'], [100, 'Nov'], [142, '15'], [189, 'Dec'], [234, '16'], [324, '15'], [416, '15'], [457, 'Mar']].forEach(q => label(A, q[0], 365, q[1], 'mid'));
label(A, 282, 365, '2025', 'mid bold');
add(A, 'rect', { x: 347, y: 358, width: 48, height: 12, rx: 1, fill: '#111416' });
label(A, 371, 364.5, "Fri 31 Jan '25", 'mid light');
const legend = (s, x, y, n) => { add(s, 'path', { d: `M${x} ${y - 1}l2 2 2-2`, fill: 'none', stroke: '#333', 'stroke-width': .9 }); label(s, x + 7, y, n); };
legend(A, 36, 73.5, '2');
label(document.getElementById('strip'), 478, 384.5, '0.000000');

/* Hourly chart */
const B = document.getElementById('hourly');
add(B, 'path', { d: 'M28 397L52 398 55 398 57 486 60 488 80 492 114 500V549H28Z', fill: '#e6dee4' });
add(B, 'path', { d: 'M28 513L45 503 60 500 80 512 114 523V549H28Z', fill: '#d3e2ec' });
add(B, 'path', { d: 'M57 484L80 488 114 500V523L80 510Z', fill: '#dfe0e3' });
profile(B, '395,257 360,265 310,275 285,280 260,290 262,300 250,310 182,318 225,325 215,335 140,345 265,352 320,362 360,372 330,380 350,386 300,395 225,400 145,408 225,415 315,425 375,433 350,440 350,450 385,458 370,465 380,475 345,485 335,495 330,502 365,508 390,515', 340, 380, 473.5, '#9b9fa3');
line(B, 28, 481.5, 474, 481.5, '#333');
line(B, 28, 549.5, 474, 549.5, '#a4a8aa');
line(B, 28, 566.5, 474, 566.5, '#b1b6b9', '3 3');
add(B, 'path', { d: 'M28 397H41L54 399 57 487 66 490 78 499 90 505 102 508 114 517', fill: 'none', stroke: '#e2b34e', 'stroke-width': 1 });
add(B, 'path', { d: 'M28 532Q35 526 50 525T114 523', fill: 'none', stroke: '#62bad0', 'stroke-width': 1 });
candles(B, `86 d 300 310 345 350;91 d 255 310 318 330;99 r 262 280 318 320;107 d 255 270 275 295;115 d 265 272 295 300;123 d 285 292 352 358;131 d 325 330 350 355;138 d 315 330 333 350;146 d 325 332 345 360;154 d 340 345 358 362;162 d 335 355 358 362;170 u 325 325 355 358;178 d 305 320 325 340;186 d 310 318 322 340;194 d 320 320 350 360;202 d 335 350 352 362;210 d 340 345 352 360;217 d 350 350 378 388;225 d 365 372 378 390;233 d 375 380 395 400;241 d 390 395 425 428;249 d 402 420 425 425;257 d 402 405 420 425;265 d 385 402 410 415;273 d 385 400 405 418;281 d 392 402 417 420;289 d 390 402 417 420;297 d 392 405 417 420;305 d 395 402 418 420;312 d 408 408 440 445;320 d 437 440 455 460;328 d 452 455 490 512;336 d 478 485 502 505;344 d 495 502 510 522`, 0, 380, 1.2);
line(B, 28, 624.5, 519, 624.5, '#6a6e72');
[33, 24, 18, 10, 28, 14, 9, 8, 6, 6, 8, 8, 7, 9, 6, 7, 12, 6, 10, 13, 10, 8, 9, 9, 7, 9, 8, 6, 11, 12, 22, 11, 8].forEach((h, i) => line(B, 30.5 + i * 2.62, 662, 30.5 + i * 2.62, 662 - h, i === 0 ? '#9495d8' : i % 7 === 1 ? '#b08a96' : '#8b8f94'));
add(B, 'path', { d: 'M34 651H41V658H38V654H34ZM44 651H49L46 658H42Z', fill: '#0b0c0d', stroke: '#fff', 'stroke-width': 1.5, 'paint-order': 'stroke' });
['0.0160000', '0.0155000', '0.0150000', '0.0145000', '0.0140000', '0.0135000', '0.0130000', '0.0125000', '', '0.0115000', '0.0110000', '0.0105000'].forEach((t, i) => t && label(B, 478, 424.3 + i * 16.7, t));
label(B, 478, 636.5, '10 B'); label(B, 478, 661.5, '0');
tag(B, 474, 481.5, 39, 8, '#0c0d0f', '0.0143019');
tag(B, 474, 553.5, 39, 15, '#050607', '');
label(B, 478, 550, '0.0122460', 'light'); label(B, 478, 557, '01:19', 'light');
tag(B, 474, 567, 39, 9, '#1a1d1f', '0.0117285');
tag(B, 474, 654, 24, 8, '#24272a', '3.07B');
[[119.5, '2'], [182.5, '3'], [245.5, '4'], [308.5, '5'], [371.5, '6'], [434.5, '7']].forEach(q => label(B, q[0], 672.5, q[1], 'mid'));
add(B, 'rect', { x: 28, y: 665, width: 70, height: 12, rx: 1, fill: '#111416' });
label(B, 32, 672, "Fri 31 Jan '25", 'light'); label(B, 77, 672, '13:00', 'light');
legend(B, 36, 402.5, '3');

/* Main chart */
const M = document.getElementById('main');
line(M, 520, 329.5, 1211, 329.5, '#a4a8aa');
line(M, 520, 362.5, 1211, 362.5, '#b0b5b9', '3 3');
line(M, 1133.5, 66, 1133.5, 665, '#b4b8bc', '3 3');
line(M, 601, 198.5, 1211, 198.5, '#222');
const band = (up, lo, ox, tint) => {
  const a = pts(up, ox, 64), b = pts(lo, ox, 64);
  add(M, 'path', { d: path([...a, ...b.slice().reverse()]) + 'Z', fill: tint || '#e5e2ec', opacity: .45 });
  add(M, 'path', { d: path(a) + 'L' + path(b.slice().reverse()).slice(1), fill: 'none', stroke: '#9ca1a5', 'stroke-width': .8 });
};
band('15,62 40,61 79,55', '15,150 40,190 79,230', 515);
band('82,232 105,228 130,242 190,250 210,248 235,187 290,187 296,190', '105,325 130,340 190,340 215,355 250,360 270,395 296,390', 515);
band('296,190 320,198 337,215', '300,280 325,355 350,362', 515);
band('350,130 370,110 395,95 430,55 432,38 465,38 480,42 512,50', '350,362 400,345 450,320 485,308 512,315', 515);
band('520,272 545,240 610,240 650,200 700,190 727,187', '525,347 560,338 620,330 680,332 727,328', 515);
band('-8,235 40,225 90,233 150,241 190,241 200,230 207,188', '15,315 45,307 90,313 150,314 190,310 207,460', 760);
band('213,475 230,465 250,468 278,457 310,475 340,500 380,518 424,522', '285,830 300,850 325,862 370,847 405,845 424,838', 760);
band('428,600 450,592 475,582 500,588 550,590 590,585 612,572 628,535 640,527', '437,683 460,670 500,665 545,695 590,780 640,970', 760);
band('645,930 660,770 695,743 710,680 750,650 780,662 815,663 836,640 856,620', '655,970 695,938 750,920 815,897 836,893 856,891', 760);
band('90,668 110,675 120,645 165,640 170,610 210,602 215,575 235,560 292,565', '90,822 105,800 170,778 210,768 250,760 292,755', 1020);
band('296,655 310,620 345,632 390,635 425,300 440,258 457,238 470,252 508,268', '296,700 330,702 390,700 410,765 422,775 440,735 480,705 508,692', 1020);
band('510,470 525,405 550,400 571,404', '510,505 540,495 560,490 571,520', 1020);
const P = [
  ...pts('16,160 25,140 38,215 48,175 55,210 65,185 75,255 80,235 90,265 103,310 110,285 122,335 133,295 140,300 150,265 160,295 172,305 180,320 187,290 200,345 208,290 218,230 227,170 233,250 242,240 250,290 260,400 266,270 275,395 283,290 295,195 302,270 312,290 326,345 335,270 342,190 352,140 368,185 375,150 388,185 397,115 410,130 420,100 430,60 432,125 440,110 448,160 458,105 465,130 475,150 483,190 495,235 510,295 520,340 530,285 545,250 555,290 565,265 580,280 605,290 615,245 630,250 640,240 655,200 662,230 680,215 690,220 700,205 712,215 722,240 735,260 740,230', 515, 64),
  ...pts('10,240 17,305 25,260 35,240 45,265 60,265 75,285 87,305 95,280 110,290 125,285 140,300 150,265 160,265 175,255 185,310 195,350 203,400 207,460 213,520 222,570 230,620 240,610 250,650 262,690 270,730 278,760 285,800 290,745 297,735 307,790 315,755 322,760 328,670 335,710 345,650 352,670 362,750 370,735 378,770 388,740 395,660 400,590 408,660 418,665 426,620 437,675 445,605 455,620 470,600 480,620 490,650 500,655 513,690 522,650 530,665 543,715 552,680 562,660 570,710 580,745 590,760 600,795 607,775 615,820 620,890 625,960 632,935 640,970 645,900 652,860 658,800 666,800 672,820 680,810 688,825 695,800 700,690 710,720 720,715 735,740 748,700 757,750 762,790 770,775 780,785', 760, 64),
  ...pts('10,760 22,765 30,750 36,830 42,720 48,650 56,610 62,680 72,730 80,790 90,680 100,730 113,665 122,690 135,680 150,705 165,630 180,640 192,680 203,640 212,585 222,640 232,590 245,640 258,630 268,665 285,640 300,670 310,625 325,690 340,680 360,650 372,685 390,670 397,620 405,510 415,420 422,350 428,410 438,330 447,350 457,400 463,490 472,450 482,490 495,490 510,500 518,440 525,405 533,440 542,490 552,480 562,495 568,540 571,565', 1020, 64)
];
[['15,126 45,135 79,148', 515], ['82,240 105,275 130,292 200,290 228,275 250,272 275,290 296,288', 515], ['300,235 335,290 355,245 400,215 440,183 480,174 512,185', 515], ['525,310 545,293 600,288 650,270 727,257', 515], ['20,262 50,268 90,274 150,275 190,278 203,290 207,325', 760], ['213,495 225,540 260,580 285,645 310,668 370,684 424,680', 760], ['428,630 437,640 470,627 520,635 570,660 612,690 628,735 640,757', 760], ['645,940 665,850 695,840 705,810 750,785 815,785 828,770 856,755', 760], ['80,765 95,735 120,715 160,700 200,683 235,662 292,658', 1020], ['296,655 330,668 390,675 410,630 425,550 440,500 460,483', 1020], ['510,485 530,450 560,460 571,480', 1020]]
  .forEach(v => add(M, 'path', { d: path(pts(v[0], v[1], 64)), fill: 'none', stroke: '#7277d8', 'stroke-width': .9 }));
let d = [];
for (let x = 521.5; x <= 1210; x += .45) {
  const y = at(P, x);
  d.push([x, y + (rnd() - .5) * (rnd() > .92 ? 24 : 9)]);
}
add(M, 'path', { d: path(d), fill: 'none', stroke: '#1d2024', 'stroke-width': .85 });
const dots = (str, ox, fill, op) => str.split(' ').forEach(c => {
  const [x, y, r] = c.split(',');
  add(M, 'circle', { cx: ox + x / 3, cy: 64 + y / 3, r: r / 3, fill, opacity: op });
});
const pink = '#f0647e', sky = '#5fb0e8';
dots('34,262,12 70,285,12 121,377,12 190,359,12 199,387,12 218,300,17 218,328,11 255,415,12 258,437,12 482,237,12 751,338,12 746,318,12', 515, pink, .5);
dots('85,296,5 490,257,5 437,175,6 620,265,6', 515, pink, .25);
dots('148,319,12 138,368,19 193,405,12 202,498,19 207,595,19 276,855,12 512,736,12 539,752,12 616,871,12 617,912,18 614,940,18 623,964,12 814,900,19', 760, pink, .55);
dots('227,653,6 258,738,6 268,760,6 361,770,5 611,837,6 802,803,6', 760, pink, .3);
dots('425,498,18', 1020, pink, .55);
dots('195,700,5 295,712,5 390,678,5', 1020, pink, .3);
dots('430,4,15 349,99,12 212,163,12 211,188,12 200,235,18 650,161,12 755,238,12', 515, sky, .5);
dots('650,137,19', 515, sky, .7);
dots('148,222,12 517,605,12 543,658,12 700,675,7', 760, sky, .5);
dots('210,501,19', 1020, sky, .75);
dots('209,562,12 38,655,12 36,733,19 410,400,12 415,360,8 398,508,10 393,530,12 392,573,10 392,595,10', 1020, sky, .5);
add(M, 'circle', { cx: 953, cy: 394, r: 3, fill: 'none', stroke: '#333', 'stroke-width': .8 });
add(M, 'path', { d: 'M952 394h3v2', fill: 'none', stroke: '#333', 'stroke-width': .8 });

[462.5, 513.5, 592.5].forEach(y => line(M, 520, y, 1254, y, '#6a6e72'));
const env = [[520, 2], [575, 2], [585, 6], [592, 7], [603, 7], [615, 3], [657, 4], [665, 3], [690, 3], [700, 1.5], [800, 1.5], [820, 3], [827, 6], [833, 7], [852, 9], [870, 6], [890, 5], [905, 3], [960, 4], [968, 8], [975, 5], [1005, 4], [1030, 5], [1033, 9], [1045, 5], [1060, 2.5], [1140, 2], [1152, 6], [1160, 11], [1170, 9], [1180, 5], [1200, 3], [1210, 4]];
[[829, 509, 487], [827, 500, 480], [835, 500, 487], [848, 499, 487], [852, 497, 480], [602, 478, 495], [873, 479, 487], [968, 476, 495], [1032, 468, 499], [1090, 476, 490], [1161, 502, 482], [1173, 502, 477]].forEach(q => line(M, q[0] + .5, q[1], q[0] + .5, q[2], '#7686d8'));
line(M, 1033.5, 487, 1033.5, 501, '#b85c7c'); line(M, 584.5, 487, 584.5, 492, '#c25c70');
d = [];
for (let x = 521.5; x <= 1210; x += .5) d.push([x, 487.3 + (rnd() - .5) * 2 * at(env, x) * (.3 + rnd() * .7)]);
add(M, 'path', { d: path(d), fill: 'none', stroke: '#15181c', 'stroke-width': .9 });
line(M, 521, 487.5, 1210, 487.5, '#3c4046');
const hues = ['#5560c8', '#b54468', '#7c4f9c', '#5f68b8', '#a44a7c'];
const trace = (p, n) => {
  let hue = hues[0], k = 0, seg = [];
  for (let x = p[0][0]; x <= p[p.length - 1][0]; x += .8) {
    const q = [x, at(p, x) + (rnd() - .5) * n];
    seg.push(q);
    if (++k % 5 === 0) {
      const up = at(p, x + 1) - at(p, x - 4);
      hue = up > 1.5 ? '#bd3f5e' : up < -1.5 ? '#4c66cf' : hues[Math.floor(rnd() * 5)];
      add(M, 'path', { d: path(seg), fill: 'none', stroke: hue, 'stroke-width': .9 });
      seg = [q];
    }
  }
  if (seg.length > 1) add(M, 'path', { d: path(seg), fill: 'none', stroke: hue, 'stroke-width': .9 });
};
trace([...pts('18,375 50,370 80,373 105,345 150,343 190,340 208,330 235,358 260,342 272,335 280,340 300,325 340,325 348,305 355,310 410,303 430,293 450,315 470,302 500,295 515,290 535,302 560,285 630,268 650,268 710,285 750,278 755,270 765,275 800,265 830,238 885,225 888,217 925,222 940,280 955,262 970,252 980,265 993,260 1003,238 1013,237 1020,270 1045,272 1080,305 1110,335', 515, 450),
  ...pts('10,350 45,380 75,390 110,390 150,378 205,360 228,365 232,320 238,290 250,297 270,340 285,335 300,340 335,337 370,352 400,350 425,348 431,333 440,350 475,362 490,385 520,402 545,405 560,385 590,370 602,350 640,368 655,375 690,368 720,380 735,372 752,395 785,390 797,357 815,380 840,375 852,335 865,355 885,350 910,355 935,372 955,365 963,368', 890, 450)], 2.4);
line(M, 520, 621.5, 1211, 621.5, '#a3a8ac', '3 3');
['18,520 78,527', '80,515 150,527 200,533 215,525 235,540 250,545 262,570 275,548 285,558 297,542', '298,515 330,527 350,515 395,510 400,503 430,507 470,512 482,520 490,540 512,555', '513,515 517,530 530,518 560,527 600,530 650,525 655,523 665,530 728,532', '730,512 750,520 800,517 860,519 925,530 938,560 944,520 950,540 965,558 993,565 1005,600 1030,605 1040,610 1060,598 1085,580 1120,600 1135,582 1160,583'].forEach(v => trace(pts(v, 515, 450), 2));
['36,517 55,512 90,520 150,533 205,547 225,553 232,600 240,620 250,625', '252,515 275,495 300,492 313,475 365,480 380,500 425,500 428,480 433,490 445,470 455,485 465,495', '470,515 480,500 510,500 560,490 595,487 602,468 620,475 685,483', '686,515 730,528 782,528 800,485 808,475 815,455 820,480 830,482 840,490 848,500 850,525 900,527', '900,512 920,510 940,520 955,520 963,532'].forEach(v => trace(pts(v, 890, 450), 2));
['0.0160000', '0.0155000', '0.0150000', '0.0145000', '0.0140000', '0.0135000', '0.0130000', '0.0125000', '0.0120000', '0.0115000', '0.0110000', '0.0105000'].forEach((t, i) => label(M, 1215, 90 + i * 31.9, t));
[[471, '2.5 B'], [503, '−2.5 B'], [538, '16 B'], [562, '15 B'], [587, '14 B'], [604.5, '5 B'], [621, '0'], [638, '−5 B'], [655, '−10 B']].forEach(q => label(M, 1215, q[0], q[1]));
tag(M, 1211, 199, 39, 9, '#0c0d0f', '0.0143019');
tag(M, 1211, 245, 39, 8, '#eef0f2', '0.0135764', '#333', 'ink');
tag(M, 1211, 333.5, 39, 15, '#050607', '');
label(M, 1215, 330, '0.0122460', 'light'); label(M, 1215, 337, '01:19', 'light');
tag(M, 1211, 362.5, 39, 9, '#16191b', '0.0117285');
add(M, 'rect', { x: 1200, y: 358, width: 10, height: 9, rx: 1, fill: '#16191b' });
add(M, 'circle', { cx: 1205, cy: 362.5, r: 3, fill: 'none', stroke: '#eee', 'stroke-width': .7 });
add(M, 'path', { d: 'M1203.500 362.500h3M1205 361v3', stroke: '#eee', 'stroke-width': .7 });
tag(M, 1211, 485.5, 33, 8, '#eef0f2', '306.19M', '#555', 'ink');
tag(M, 1211, 573.5, 28, 8, '#eef0fa', '14.56B', '#6a74e6', 'indigo');
tag(M, 1211, 627.5, 28, 8, '#eef0fa', '−1.699', '#6a74e6', 'indigo');
[[541.5, '23'], [613.5, '24'], [685.5, '25'], [757.5, '26'], [829.5, '27'], [901.5, '28'], [973.5, '29'], [1045.5, '30']].forEach(q => label(M, q[0], 672.5, q[1], 'mid'));
label(M, 1189.5, 672.5, 'Feb', 'mid bold');
add(M, 'rect', { x: 1099, y: 665, width: 70, height: 12, rx: 1, fill: '#111416' });
label(M, 1103, 672, "Fri 31 Jan '25", 'light'); label(M, 1148, 672, '05:20', 'light');
add(M, 'path', { d: 'M1231 669.500h4.500l2 3-2 3h-4.500l-2-3z', fill: 'none', stroke: '#444', 'stroke-width': .8 });
add(M, 'circle', { cx: 1233.3, cy: 672.5, r: 1, fill: 'none', stroke: '#444', 'stroke-width': .8 });
add(M, 'path', { d: 'M1188.500 70v5M1186.500 73.500l2 2 2-2M1200 72v-2h5v2M1200 74v2h5v-2', fill: 'none', stroke: '#444', 'stroke-width': .8 });
legend(M, 527, 73.5, '2');
```
